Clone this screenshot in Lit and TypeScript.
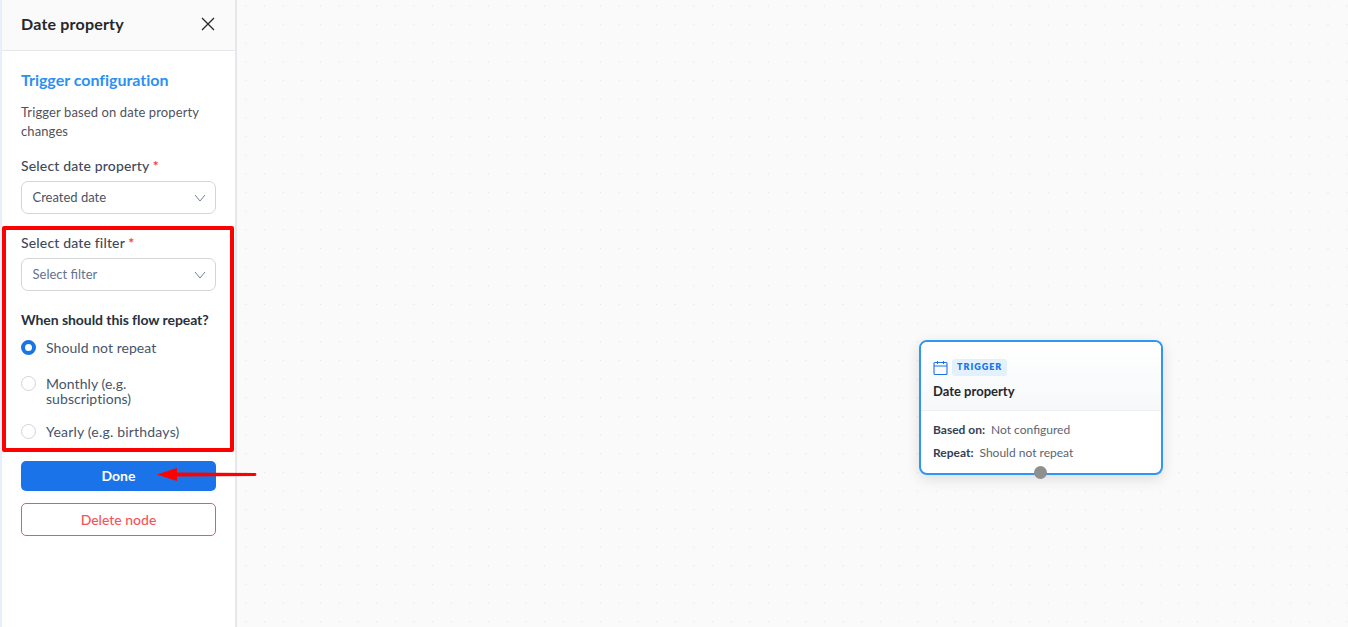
import { LitElement, html, css } from "lit";
import { customElement } from "lit/decorators.js";

const chevron = html`<svg class="chev" width="12" height="8" viewBox="0 0 12 8" fill="none" stroke="#64748b" stroke-width="0.9"><path d="M1 1l5 6 5-6"/></svg>`;

@customElement("app-root")
export class AppRoot extends LitElement {
  static styles = css`
    :host { display: block; width: 1348px; height: 627px; overflow: hidden; position: relative; font-family: "Lato", "Inter", sans-serif; color: #334155; }
    * { box-sizing: border-box; }
    .page { display: flex; height: 627px; background: #e8eefc; padding-left: 2px; }
    .panel { width: 235px; flex: none; background: #fff; border-right: 2px solid #e5e7eb; display: flex; flex-direction: column; }
    .head { height: 51px; flex: none; background: #fafafa; border-bottom: 1px solid #e5e7eb; display: flex; align-items: center; justify-content: space-between; padding: 0 20px 3px 19px; }
    .head h1 { margin: 0; font-size: 16px; letter-spacing: .2px; font-weight: 700; color: #27272a; }
    .body { padding: 20px 19px 0; display: flex; flex-direction: column; }
    h2 { margin: 0; font-size: 16px; font-weight: 700; color: #2b90f5; line-height: 18px; letter-spacing: -.02px; }
    .desc { margin: 14px 0 0; font-size: 13px; line-height: 19px; color: #52525b; letter-spacing: .11px; }
    .label { font-size: 14px; font-weight: 500; line-height: 18px; color: #3f4a5a; letter-spacing: .16px; margin-top: 20px; }
    .label.first { margin-top: 16px; }
    .label b { color: #ef4444; font-weight: 700; }
    .select { height: 33px; margin-top: 6px; border: 1px solid #d4d4d8; border-radius: 7px; display: flex; align-items: center; justify-content: space-between; padding: 0 9px 1px 10.5px; font-size: 13px; color: #475569; }
    .select.ph { color: #64748b; }
    .chev { margin-top: 1px; }
    .canvas { flex: 1; background-color: #fafafa; background-image: radial-gradient(circle, #e4e4e4 0.8px, transparent 1px); background-size: 18.67px 18.67px; background-position: -0.33px -3.33px; position: relative; }
    .q { margin-top: 20px; font-size: 14px; font-weight: 700; line-height: 18px; color: #27303f; letter-spacing: -.07px; }
    .radio { display: flex; gap: 10px; font-size: 14px; line-height: 15px; color: #475569; letter-spacing: .06px; }
    .radio.y { letter-spacing: .2px; }
    .dot { width: 15px; height: 15px; border-radius: 50%; border: 1px solid #d4d4d8; flex: none; }
    .dot.on { border: 4px solid #1a73e8; }
    .radios { display: flex; flex-direction: column; gap: 18px; margin-top: 11px; }
    .radio.s { margin-bottom: 3px; }
    .btn { height: 30px; margin-top: 22px; padding-bottom: 1px; border-radius: 5px; background: #1a73e8; color: #fff; font-size: 14px; font-weight: 700; display: flex; align-items: center; justify-content: center; }
    .del { height: 33px; margin-top: 12px; padding-bottom: 1px; border-radius: 5px; background: #fff; border: 1px solid #f4555a; color: #f4555a; font-size: 14px; font-weight: 500; display: flex; align-items: center; justify-content: center; }
    .redbox { position: absolute; left: 2px; top: 226px; width: 232px; height: 226px; border: 4px solid #f00; border-radius: 2px; pointer-events: none; }
    .arrow { position: absolute; left: 155px; top: 465px; }
    .node { position: absolute; left: 919px; top: 340px; width: 244px; height: 135px; background: #fff; border: 2px solid #2f96f3; border-radius: 8px; box-shadow: 0 4px 14px rgba(0,0,0,.12); }
    .nhead { height: 69px; background: linear-gradient(#fff, #f6f8fa); border-bottom: 1px solid #eef0f3; border-radius: 6px 6px 0 0; padding: 17px 12px 0; }
    .ntop { display: flex; align-items: center; gap: 4px; height: 17px; }
    .badge { background: #e3f1fd; border-radius: 3px; color: #1a73e8; font-size: 9px; font-weight: 800; letter-spacing: 1px; padding: 0 5px; height: 17px; line-height: 16px; }
    .ntitle { font-size: 13px; font-weight: 700; color: #27272a; margin-top: 6px; line-height: 18px; }
    .nbody { padding: 11px 12px 0; font-size: 12px; display: flex; flex-direction: column; gap: 7px; color: #5b6470; }
    .nrow { display: flex; gap: 6px; line-height: 16px; }
    .nrow b { color: #334155; font-weight: 700; }
    .handle { position: absolute; left: 113px; bottom: -6px; width: 13px; height: 13px; border-radius: 50%; background: #8f8f8f; }
  `;
  render() {
    return html`<div class="page">
      <aside class="panel">
        <div class="head"><h1>Date property</h1>
          <svg width="14" height="14" viewBox="0 0 14 14" stroke="#27272a" stroke-width="1.3" fill="none"><path d="M1 1l12 12M13 1L1 13"/></svg></div>
        <div class="body">
          <h2>Trigger configuration</h2>
          <p class="desc">Trigger based on date property changes</p>
          <div class="label first">Select date property <b>*</b></div>
          <div class="select">Created date ${chevron}</div>
          <div class="label">Select date filter <b>*</b></div>
          <div class="select ph">Select filter ${chevron}</div>
          <div class="q">When should this flow repeat?</div>
          <div class="radios">
            <div class="radio s"><span class="dot on"></span><span>Should not repeat</span></div>
            <div class="radio"><span class="dot"></span><span>Monthly (e.g.<br>subscriptions)</span></div>
            <div class="radio y"><span class="dot"></span><span>Yearly (e.g. birthdays)</span></div>
          </div>
          <div class="btn">Done</div>
          <div class="del">Delete node</div>
        </div>
      </aside>
      <main class="canvas"></main>
      <div class="redbox"></div>
      <svg class="arrow" width="104" height="20" viewBox="0 0 104 20"><path d="M2 9.5L22 3v4.5l78 .6a1.4 1.4 0 010 2.8l-78 .6V16z" fill="#f00"/></svg>
      <div class="node">
        <div class="nhead">
          <div class="ntop">
            <svg width="15" height="15" viewBox="0 0 15 15" fill="none" stroke="#1a73e8" stroke-width="1.1"><rect x="1" y="2.5" width="13" height="12" rx="1"/><path d="M1 6h13M4.5 1v3M10.5 1v3"/></svg>
            <span class="badge">TRIGGER</span>
          </div>
          <div class="ntitle">Date property</div>
        </div>
        <div class="nbody">
          <div class="nrow"><b>Based on:</b><span>Not configured</span></div>
          <div class="nrow"><b>Repeat:</b><span>Should not repeat</span></div>
        </div>
        <div class="handle"></div>
      </div>
    </div>`;
  }
}
